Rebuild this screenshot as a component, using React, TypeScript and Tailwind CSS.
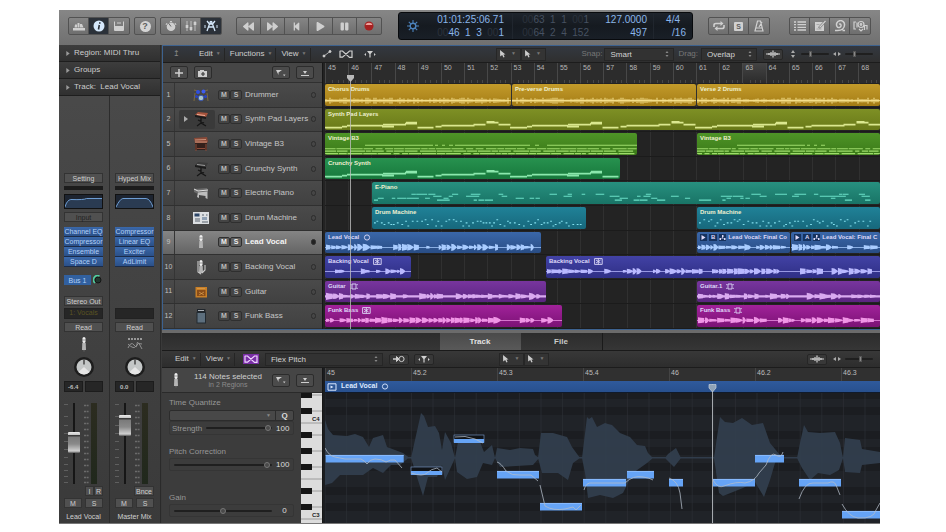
import { useState } from 'react';
import type { ReactNode } from 'react';
import clsx from 'clsx';
import { FaBackward, FaForward, FaStepBackward, FaPlay, FaPause } from 'react-icons/fa';

type WaveKind = 'drums' | 'pad' | 'organ' | 'epiano' | 'beats' | 'voice' | 'guitar';
type Badge = 'circle' | 'stereo' | 'loop';

interface Clip {
  title: string;
  from: number;
  to: number;
  badge?: Badge;
  take?: string;
}

interface Track {
  id: number;
  name: string;
  icon: ReactNode;
  kind: WaveKind;
  color: string;
  ink: string;
  clips: Clip[];
  folder?: boolean;
}

// visible length of the arrangement, in timeline units
const SPAN = 555;

function seeded(seed: number) {
  let s = seed * 7919 + 17;
  return () => {
    s = (s * 16807) % 2147483647;
    return s / 2147483647;
  };
}

function drumsPath(length: number, seed: number) {
  const rnd = seeded(seed);
  let d = '';
  for (let x = 1; x < length - 1; x += 2) {
    const h = rnd() > 0.8 ? 3 : 1 + rnd() * 1.5;
    d += `M${x} ${17 - h}V${17 + h}`;
  }
  return d + `M0 17H${length}`;
}

const PAD_A = [[0, 17, 19], [17, 22, 18], [22, 45, 17], [45, 58, 17], [57, 69, 18], [58, 81, 16], [81, 92, 14], [80, 92, 15]];
const PAD_B = [[0, 16, 19], [18, 24, 18], [24, 45, 17], [45, 57, 17], [56, 68, 16], [69, 77, 13], [69, 81, 14], [81, 93, 16]];

function padPath(length: number) {
  let d = '';
  for (let cell = 0; cell * 92.5 < length; cell++) {
    const notes = cell % 2 ? PAD_B : PAD_A;
    notes.forEach(([a, b, y]) => {
      const x = cell * 92.5 + a;
      if (x < length - 4) d += `M${x} ${y}H${Math.min(cell * 92.5 + b, length)}`;
    });
  }
  return d;
}

function organPath(length: number, seed: number) {
  const rnd = seeded(seed);
  let d = `M40 12.5H${Math.min(108, length)}M110 12.5h3M117 12.5h3M124 12.5h4`;
  if (length > 200) d += `M130 12.5H205M210 12.5h4M222 12.5H${length}`;
  [16, 18.5, 21].forEach((y) => {
    for (let x = 0; x < length - 6; ) {
      const w = 4 + rnd() * 12;
      d += `M${x} ${y}h${Math.min(w, length - x)}`;
      x += w + (rnd() > 0.6 ? 2.5 : 0.8);
    }
  });
  return d;
}

function notesPath(length: number, seed: number, small: boolean) {
  const rnd = seeded(seed);
  let d = '';
  for (let x = 2; x < length - 6; ) {
    const w = small ? 1.8 : 3 + rnd() * 6;
    const y = small ? 13 + Math.floor(rnd() * 5) * 1.6 : 12.5 + Math.floor(rnd() * 4) * 2;
    d += `M${x} ${y}h${w}`;
    x += small ? 2 + rnd() * 3 : rnd() > 0.8 ? 14 : 1 + rnd() * 5;
  }
  return d;
}

function blobsPath(length: number, seed: number, amp: number) {
  const rnd = seeded(seed);
  const mid = 15.6;
  let d = `M0 ${mid - 0.4}H${length}V${mid + 0.4}H0Z`;
  let x = 1;
  while (x < length - 9) {
    if (rnd() < 0.12) {
      x += 4 + rnd() * 8;
      continue;
    }
    const w = 2.5 + rnd() * 5;
    const h = amp * (0.4 + rnd() * 0.6);
    const rise = rnd() > 0.6 ? h * 0.9 : h;
    const tail = rnd() > 0.5 ? 0.8 : h * 0.7;
    d += `M${x} ${mid - rise}L${x + w * 0.5} ${mid - h * 0.8} ${x + w} ${mid - tail}V${mid + tail}L${x + w * 0.5} ${mid + h * 0.8} ${x} ${mid + rise}Z`;
    x += w + rnd() * 0.8;
  }
  return d;
}

function Wave({ kind, length, seed, ink }: { kind: WaveKind; length: number; seed: number; ink: string }) {
  let body: ReactNode;
  if (kind === 'drums') body = <path d={drumsPath(length, seed)} stroke={ink} strokeWidth="1" />;
  else if (kind === 'pad') body = <path d={padPath(length)} stroke={ink} strokeWidth="1.8" />;
  else if (kind === 'organ') body = <path d={organPath(length, seed)} stroke={ink} strokeWidth="1.1" />;
  else if (kind === 'epiano') body = <path d={notesPath(length, seed, false)} stroke={ink} strokeWidth="1.1" />;
  else if (kind === 'beats') body = <path d={notesPath(length, seed, true)} stroke={ink} strokeWidth="1.1" />;
  else if (kind === 'guitar')
    body = <path d={blobsPath(length, seed, 3.8) + `M0 14.4H${length}V16.8H0Z`} fill={ink} />;
  else body = <path d={blobsPath(length, seed, 3.8)} fill={ink} />;
  return (
    <svg className="absolute inset-0 h-full w-full" viewBox={`0 0 ${length} 22`} preserveAspectRatio="none" fill="none">
      {body}
    </svg>
  );
}

function ClipBadge({ type }: { type: Badge }) {
  return (
    <svg viewBox="0 0 9 7" className="h-[7px] w-[9px] shrink-0" fill="none" stroke="currentColor" strokeWidth="0.9">
      {type === 'circle' && <circle cx="4" cy="3.5" r="2.6" />}
      {type === 'stereo' && <path d="M.6.6h7.6v5.8H.6zM2 2l4.6 3M6.600 2 2 5M4.300 .6v5.800" />}
      {type === 'loop' && <path d="M2 1h4v5H2zM.8 2.200V1M7.200 2.200V1M.8 6V4.800M7.200 6V4.800" />}
    </svg>
  );
}

// ---- instrument pictures -------------------------------------------------

const pic = 'h-4 w-4';

const DrumKit = () => (
  <svg viewBox="0 0 16 16" className={pic}>
    <path d="M2 6l-1 8M14 6l1 8M1 3l4 1M15 3l-4 1" stroke="#8a7440" strokeWidth=".8" />
    <circle cx="5" cy="5" r="2" fill="#2f4fe0" />
    <circle cx="10.500" cy="4.500" r="2" fill="#3d5cf0" />
    <circle cx="3.500" cy="9.500" r="1.600" fill="#2a44c0" />
    <circle cx="12.500" cy="9.500" r="1.600" fill="#2a44c0" />
    <circle cx="8" cy="11" r="2.800" fill="#a9c6cc" stroke="#3752a8" />
  </svg>
);
const Keys = ({ wood, face }: { wood: string; face: string }) => (
  <svg viewBox="0 0 16 16" className={pic}>
    <path d="M2 4l3-3 10 1-2 4z" fill={wood} />
    <path d="M2 4l11 2v2L2 6z" fill="#1b1b1b" />
    <path d="M4 3.500l8 1" stroke={face} strokeWidth="1" />
    <path d="M8 7v6M4 15l4-3 5 3M5 9l6 3" stroke="#161616" strokeWidth="1.300" fill="none" />
  </svg>
);
const Organ = () => (
  <svg viewBox="0 0 16 16" className={pic}>
    <path d="M1 2l13-1 1 5-2 1H2z" fill="#8a4a38" />
    <path d="M2 4l11-.5M2 6h12" stroke="#d9a48b" strokeWidth=".8" />
    <path d="M2 7h12v7H2z" fill="#33201b" />
    <path d="M3 15V8M13 15V8M4 12.500h8" stroke="#8a4a38" />
  </svg>
);
const Piano = () => (
  <svg viewBox="0 0 16 16" className={pic}>
    <path d="M1 4l13-1 1 4-10 2-4-2z" fill="#6d6d6d" />
    <path d="M1 4l4 2 10-1" stroke="#e0e0e0" fill="none" />
    <path d="M5 7.500l9.500-1v7.500l-2-1V11L6 10v3l-2-1z" fill="#bdbdbd" />
  </svg>
);
const Machine = () => (
  <svg viewBox="0 0 16 16" className={pic}>
    <rect x="0" y="2" width="16" height="12" fill="#dcdfe2" />
    <rect x="1.500" y="3.500" width="5" height="3" fill="#2d4668" />
    <path d="M2 9h5M2 11h5M9 5h2M13 5h1.500M9 12h6" stroke="#59626c" strokeWidth="1.200" />
    <rect x="9" y="7" width="5" height="3" fill="#8fa0b4" />
  </svg>
);
const Mic = ({ stand }: { stand?: boolean }) => (
  <svg viewBox="0 0 16 16" className={pic}>
    <rect x="6.500" y="1" width="3" height="6" rx="1.500" fill="#efefef" />
    <path d="M6.300 7h3.400l.3 7H6z" fill="#b5b5b5" />
    <path d="M6.500 4h3M8 14v1.500" stroke="#777" strokeWidth=".7" />
    {stand && <path d="M5 2v11l3 2M12 6v5l-3 3" stroke="#c9c9c9" fill="none" strokeWidth="1.100" />}
  </svg>
);
const Amp = () => (
  <svg viewBox="0 0 16 16" className={pic}>
    <rect x="2.500" y="3" width="11.500" height="10.500" fill="#c87f27" />
    <rect x="4" y="6" width="8.500" height="6" fill="#8a4d18" />
    <path d="M4 4.500h8M6 8l5 3M11 8l-5 3" stroke="#dca050" strokeWidth=".7" />
  </svg>
);
const BassAmp = () => (
  <svg viewBox="0 0 16 16" className={pic}>
    <rect x="4" y="1" width="8.500" height="3" fill="#20262c" />
    <path d="M5 2.500h6" stroke="#cfd6dc" strokeWidth=".8" />
    <rect x="4" y="4.500" width="8.500" height="10.500" fill="#5d6f7e" stroke="#222a31" />
  </svg>
);

const tracks: Track[] = [
  { id: 1, name: 'Drummer', icon: <DrumKit />, kind: 'drums', color: 'from-[#c39b2a] to-[#a47c15]', ink: '#fbe795', clips: [
    { title: 'Chorus Drums', from: 0, to: 186 }, { title: 'Pre-verse Drums', from: 187, to: 371 }, { title: 'Verse 2 Drums', from: 372, to: 555 } ] },
  { id: 2, name: 'Synth Pad Layers', icon: <Keys wood="#a5533c" face="#f0b09a" />, kind: 'pad', folder: true, color: 'from-[#7e9025] to-[#697918]', ink: '#dbe88f', clips: [
    { title: 'Synth Pad Layers', from: 0, to: 555 } ] },
  { id: 5, name: 'Vintage B3', icon: <Organ />, kind: 'organ', color: 'from-[#4e9427] to-[#3b7a18]', ink: '#9fdc6c', clips: [
    { title: 'Vintage B3', from: 0, to: 312 }, { title: 'Vintage B3', from: 372, to: 555 } ] },
  { id: 6, name: 'Crunchy Synth', icon: <Keys wood="#3b3b3b" face="#999" />, kind: 'pad', color: 'from-[#27924f] to-[#17783c]', ink: '#8be8ad', clips: [
    { title: 'Crunchy Synth', from: 0, to: 295 } ] },
  { id: 7, name: 'Electric Piano', icon: <Piano />, kind: 'epiano', color: 'from-[#27907f] to-[#197466]', ink: '#6be0c8', clips: [
    { title: 'E-Piano', from: 47, to: 555 } ] },
  { id: 8, name: 'Drum Machine', icon: <Machine />, kind: 'beats', color: 'from-[#208298] to-[#17687c]', ink: '#84e0ee', clips: [
    { title: 'Drum Machine', from: 47, to: 261 }, { title: 'Drum Machine', from: 372, to: 555 } ] },
  { id: 9, name: 'Lead Vocal', icon: <Mic />, kind: 'voice', color: 'from-[#3a67a9] to-[#294d85]', ink: '#a9ccff', clips: [
    { title: 'Lead Vocal', from: 0, to: 216, badge: 'circle' }, { title: 'Lead Vocal: Final Co', from: 372, to: 465, take: 'B' }, { title: 'Lead Vocal: Final C', from: 466, to: 555, take: 'A' } ] },
  { id: 10, name: 'Backing Vocal', icon: <Mic stand />, kind: 'voice', color: 'from-[#4242a5] to-[#2f2f85]', ink: '#b9b9ff', clips: [
    { title: 'Backing Vocal', from: 0, to: 86, badge: 'stereo' }, { title: 'Backing Vocal', from: 221, to: 555, badge: 'stereo' } ] },
  { id: 11, name: 'Guitar', icon: <Amp />, kind: 'guitar', color: 'from-[#78359e] to-[#5a2580]', ink: '#d9aaf0', clips: [
    { title: 'Guitar', from: 0, to: 221, badge: 'loop' }, { title: 'Guitar.1', from: 372, to: 555, badge: 'loop' } ] },
  { id: 12, name: 'Funk Bass', icon: <BassAmp />, kind: 'voice', color: 'from-[#a1229a] to-[#7b1275]', ink: '#f095e6', clips: [
    { title: 'Funk Bass', from: 0, to: 237, badge: 'stereo' }, { title: 'Funk Bass', from: 372, to: 555, badge: 'loop' } ] },
];

// ---- toolbar ---------------------------------------------------------------

function ToolGroup({ children }: { children: ReactNode }) {
  return (
    <div className="flex h-[18px] shrink-0 divide-x divide-[#525252] overflow-hidden rounded-[2px] border border-[#525252] bg-gradient-to-b from-[#858585] to-[#6e6e6e]">
      {children}
    </div>
  );
}

function ToolButton({ label, active, wide, children }: { label: string; active?: boolean; wide?: boolean; children: ReactNode }) {
  return (
    <button
      aria-label={label}
      className={clsx(
        'flex items-center justify-center',
        wide ? 'w-6' : 'w-5',
        active ? 'bg-[#2b3139] text-[#d5e8fb]' : 'text-[#cfcfcf]'
      )}
    >
      {children}
    </button>
  );
}

const glyph = 'h-3 w-3';

function Toolbar() {
  return (
    <header className="flex h-[35px] items-center bg-gradient-to-b from-[#868686] to-[#707070] px-[9px] pb-[3px]">
      <div className="flex gap-1">
        <ToolGroup>
          <ToolButton label="Library">
            <svg viewBox="0 0 12 12" className={glyph} fill="currentColor"><path d="M0 8h12v2.500H0zM2 4.500h2v3H1.500zM4.500 3h2v4.500h-2zM7 4h2l1.500 3.500H7z" /></svg>
          </ToolButton>
          <ToolButton label="Inspector" active>
            <svg viewBox="0 0 12 12" className={glyph}><circle cx="6" cy="6" r="5.500" fill="currentColor" /><path d="M6.800 2.300v1.500M6.300 5l-.8 4.500" stroke="#2b3139" strokeWidth="1.600" /></svg>
          </ToolButton>
          <ToolButton label="Toolbar">
            <svg viewBox="0 0 12 12" className={glyph} fill="none" stroke="currentColor"><path d="M1.500 1.500v9h9v-9M1.500 6.500h9M4 3h4" /><path d="M2 8.500h8" strokeWidth="3" /></svg>
          </ToolButton>
        </ToolGroup>
        <ToolGroup>
          <ToolButton label="Quick Help">
            <span className="flex h-[11px] w-[11px] items-center justify-center rounded-full bg-[#d4d4d4] text-[9px] font-bold leading-none text-[#5d5d5d]">?</span>
          </ToolButton>
        </ToolGroup>
        <ToolGroup>
          <ToolButton label="Smart Controls">
            <svg viewBox="0 0 12 12" className={glyph} fill="currentColor"><circle cx="6" cy="6.800" r="4.300" /><path d="M6 6.500L3.500 3" stroke="#666" /><path d="M1 5l1-2M10 3l1 2M5 1.500h2" stroke="currentColor" /></svg>
          </ToolButton>
          <ToolButton label="Mixer">
            <svg viewBox="0 0 12 12" className={glyph} stroke="currentColor"><path d="M2 1v10M6 1v10M10 1v10" strokeWidth=".8" /><path d="M2 5v3M6 7v3M10 2v3" strokeWidth="2.600" /></svg>
          </ToolButton>
          <ToolButton label="Editors" active>
            <svg viewBox="0 0 14 12" className="h-3 w-[14px]" fill="none" stroke="currentColor" strokeWidth="1.300"><path d="M3 1l2.500 3h3L11 1M5.500 4l-2.500 7M8.500 4L11 11M5 7h4" /><circle cx="7" cy="2.500" r="1" /><path d="M1 5v3M13 5v3" strokeWidth="1" /></svg>
          </ToolButton>
        </ToolGroup>
      </div>
      <div className="ml-[14px]">
        <ToolGroup>
          <ToolButton label="Rewind" wide><FaBackward size={11} /></ToolButton>
          <ToolButton label="Forward" wide><FaForward size={11} /></ToolButton>
          <ToolButton label="Go to Beginning" wide><FaStepBackward size={9} /></ToolButton>
          <ToolButton label="Play" wide><FaPlay size={9} /></ToolButton>
          <ToolButton label="Pause" wide><FaPause size={9} /></ToolButton>
          <ToolButton label="Record" wide>
            <svg viewBox="0 0 10 10" className="h-[10px] w-[10px]"><circle cx="5" cy="5" r="4.500" fill="#a62121" /><path d="M1.500 4a3.600 3 0 0 1 7 0z" fill="#f0a09a" /></svg>
          </ToolButton>
        </ToolGroup>
      </div>
      <Display />
      <ToolGroup>
        <ToolButton label="Cycle">
          <svg viewBox="0 0 14 12" className="h-3 w-[14px]" fill="none" stroke="currentColor" strokeWidth="1.600"><path d="M2 7V5q0-1.500 2-1.500h5M12 5v2q0 1.500-2 1.500H5" /><path d="M8.500 1l3 2.500-3 2.500zM5.500 6l-3 2.500 3 2.500z" fill="currentColor" stroke="none" /></svg>
        </ToolButton>
        <ToolButton label="Solo">
          <span className="flex h-[9px] w-[9px] items-center justify-center rounded-[1px] bg-[#d0d0d0] text-[7px] font-bold leading-none text-[#5d5d5d]">S</span>
        </ToolButton>
        <ToolButton label="Metronome">
          <svg viewBox="0 0 12 12" className={glyph} fill="none" stroke="currentColor" strokeWidth="1.200"><path d="M4.500 1h3L10 11H2zM3 8h6M6 7l3-5" /></svg>
        </ToolButton>
      </ToolGroup>
      <div className="ml-[19px]">
        <ToolGroup>
          <ToolButton label="List Editors">
            <svg viewBox="0 0 12 12" className={glyph} stroke="currentColor"><path d="M0 2h2M0 4.700h2M0 7.300h2M0 10h2M3.500 2H12M3.500 4.700H12M3.500 7.300H12M3.500 10H12" strokeWidth="1.300" /></svg>
          </ToolButton>
          <ToolButton label="Note Pads">
            <svg viewBox="0 0 12 12" className={glyph} fill="currentColor"><path d="M1 2h9v9H1z" /><path d="M5 8l6-6.500" stroke="#707070" strokeWidth="2.500" /><path d="M5.500 7.500L11.500 1" stroke="currentColor" strokeWidth="1.300" /><path d="M2.500 4.500h3M2.500 9h5" stroke="#999" strokeWidth=".7" /></svg>
          </ToolButton>
          <ToolButton label="Apple Loops">
            <svg viewBox="0 0 12 12" className={glyph} fill="none" stroke="currentColor" strokeWidth="1.500"><path d="M1 10.500h2.500C8 10.500 10.500 8 10.500 5A4 4 0 1 0 3 6.500C4 8.500 7.500 7.500 7 5q-.5-1.500-2-.8M8.500 10.500H11" /></svg>
          </ToolButton>
          <ToolButton label="Browser">
            <svg viewBox="0 0 15 12" className="h-3 w-[15px]" fill="none" stroke="currentColor" strokeWidth="1.200"><path d="M3 2H1v7h2M4 7.500V2.500" /><circle cx="8" cy="4.500" r="3" /><circle cx="8" cy="4.500" r=".8" /><path d="M11.500 10V5.500h2.500V9.500M6 9l2 2 2-2" /></svg>
          </ToolButton>
        </ToolGroup>
      </div>
    </header>
  );
}

const dim = 'text-[#2b323c]';

function Display() {
  return (
    <section
      aria-label="LCD display"
      className="ml-4 mr-[15px] flex h-7 min-w-0 flex-1 items-stretch overflow-hidden rounded-[3px] border border-[#080a0d] bg-gradient-to-b from-[#1e242c] via-[#151a20] to-[#191f27] text-[10px] leading-[13px] text-[#8ab6ea]"
    >
      <button aria-label="Display mode" className="ml-2 flex shrink-0 items-center text-[#4c83bd]">
        <svg viewBox="0 0 12 12" className="h-3 w-3" fill="none" stroke="currentColor">
          <circle cx="6" cy="6" r="2.800" strokeWidth="1.400" />
          <path d="M6 0v3M6 9v3M0 6h3M9 6h3M1.800 1.800l2 2M8.200 8.200l2 2M10.200 1.800l-2 2M3.800 8.200l-2 2" strokeWidth="1.100" />
        </svg>
      </button>
      <div className="w-[85px] shrink-0 whitespace-pre text-right">
        <p>01:01:25:06.71</p>
        <p><span className={dim}>00</span>46  1  3  <span className={dim}>00</span>1</p>
      </div>
      <div className="ml-2 min-w-0 flex-1 whitespace-pre border-l border-[#20262e] pr-[6px] text-right text-[#465161]">
        <p><span className={dim}>00</span>63  1  1  <span className={dim}>00</span>1</p>
        <p><span className={dim}>00</span>64  2  4  152</p>
      </div>
      <div className="w-[52px] shrink-0 text-right">
        <p>127.0000</p>
        <p>497</p>
      </div>
      <div className="ml-[6px] w-[39px] shrink-0 border-l border-[#20262e] pr-[6px] text-right">
        <p className="pr-[6px]">4/4</p>
        <p>/16</p>
      </div>
    </section>
  );
}

// ---- shared small controls ---------------------------------------------------

const flat = 'rounded-[2px] border border-[#262626] bg-[#383838]';

function MenuButton({ children }: { children: string }) {
  return (
    <button className="flex h-[13px] items-center gap-[3px] border-r border-[#252525] pl-[5px] pr-[3px]">
      {children}
      <span className="text-[5px] text-[#777]">▼</span>
    </button>
  );
}

function Tools() {
  return (
    <div className="flex">
      {['Left-click tool', 'Command-click tool'].map((label) => (
        <button key={label} aria-label={label} className="flex h-[13px] w-[25px] items-center justify-center gap-[5px] border border-[#262626] bg-[#343434]">
          <svg viewBox="0 0 6 8" className="h-2 w-[6px]" fill="#ccc"><path d="M0 0l5.500 4.500H3.500L4.600 7l-1.200.6L2.200 5 .2 6.600z" /></svg>
          <span className="text-[5px] text-[#777]">▼</span>
        </button>
      ))}
    </div>
  );
}

function Picker({ id, value, width }: { id: string; value: string; width: string }) {
  return (
    <div className={clsx('flex h-[13px] items-center justify-between border border-[#262626] bg-[#323232] pl-[5px] pr-1', width)}>
      <select id={id} aria-label={id} className="w-full appearance-none bg-transparent text-[8px] leading-[11px] text-[#d2d2d2] outline-none">
        <option>{value}</option>
      </select>
      <svg viewBox="0 0 4 8" className="h-2 w-1 shrink-0" fill="#888"><path d="M2 1l1.500 2h-3zM2 7L.5 5h3z" /></svg>
    </div>
  );
}

function Slider({ label, value, className, light }: { label: string; value: number; className?: string; light?: boolean }) {
  return (
    <input
      type="range"
      aria-label={label}
      defaultValue={value}
      className={clsx(
        'h-[2px] min-w-0 appearance-none rounded bg-[#1f1f1f] [&::-webkit-slider-thumb]:appearance-none [&::-webkit-slider-thumb]:border',
        light
          ? '[&::-webkit-slider-thumb]:h-[6px] [&::-webkit-slider-thumb]:w-[3px] [&::-webkit-slider-thumb]:border-[#555] [&::-webkit-slider-thumb]:bg-[#888]'
          : '[&::-webkit-slider-thumb]:h-[6px] [&::-webkit-slider-thumb]:w-[6px] [&::-webkit-slider-thumb]:rounded-full [&::-webkit-slider-thumb]:border-[#777] [&::-webkit-slider-thumb]:bg-[#4a4a4a]',
        className
      )}
    />
  );
}

const FlexGlyph = () => (
  <svg viewBox="0 0 14 8" className="h-2 w-[14px]" fill="none" stroke="currentColor" strokeWidth="1.200">
    <path d="M1 .8v6.400H3.500L10.500 1H13v6.400H10.500L3.500 1H1" />
  </svg>
);
const CatchGlyph = () => (
  <svg viewBox="0 0 12 8" className="h-2 w-3" fill="currentColor"><path d="M3 1h6L6.600 4v3.500H5.400V4zM2 3v3L.3 4.500zM10 3v3l1.700-1.500z" /></svg>
);
const WaveGlyph = () => (
  <svg viewBox="0 0 14 8" className="h-2 w-[14px]" stroke="currentColor" strokeWidth="1.200"><path d="M0 4h14M3 3v2M5 2v4M7 .5v7M9 2v4M11 3v2" /></svg>
);
const ArrowsGlyph = ({ up }: { up?: boolean }) => (
  <svg viewBox="0 0 8 8" className={clsx('h-2 w-2 shrink-0', up && 'rotate-90')} fill="#aaa"><path d="M0 4l3-2v4zM8 4L5 2v4z" /></svg>
);

function HeaderButton({ label, children }: { label: string; children: ReactNode }) {
  return (
    <button aria-label={label} className="flex h-[13px] w-[18px] items-center justify-center rounded-[2px] border border-[#2c2c2c] bg-[#4b4b4b] text-[#cfcfcf]">
      {children}
    </button>
  );
}
const FilterGlyph = () => (
  <svg viewBox="0 0 10 8" className="h-2 w-[10px]" fill="currentColor"><path d="M0 1h6L2.500 3.500V6zM7 5.500l1.200 1.700L9.500 5.500z" /></svg>
);
const TrayGlyph = () => (
  <svg viewBox="0 0 10 8" className="h-2 w-[10px]" fill="currentColor"><path d="M3 2h4L5 5zM1 6h8v1H1z" /></svg>
);

// ---- inspector -----------------------------------------------------------------

interface StripProps {
  preset: string;
  input?: string;
  inserts: string[];
  send?: string;
  output?: string;
  group?: string;
  gain: string;
  level: number;
  name: string;
  curve: string;
  icon: ReactNode;
  footer: string[];
}

const slotBase = 'flex h-[10px] shrink-0 items-center justify-center border border-[#333] bg-[#505050] text-[7px] leading-none whitespace-nowrap';
const slot = slotBase + ' text-[#cfcfcf]';

function Strip(p: StripProps) {
  return (
    <div className="flex min-w-0 flex-1 flex-col pl-[5px] pr-[6px] pt-[77px]">
      <button className={slot}>{p.preset}</button>
      <div className="mt-[3px] h-1 bg-[#1c1c1c]" />
      <div className="mt-1 h-[15px] border border-[#111] bg-[#1d2430]">
        <svg viewBox="0 0 38 13" className="h-full w-full" preserveAspectRatio="none">
          <path d={p.curve + 'V13H0Z'} fill="#2a3b52" />
          <path d={p.curve} fill="none" stroke="#6fa0d6" />
        </svg>
      </div>
      <div className="mt-[3px] flex h-[15px] flex-col">
        {p.input && <button className={clsx(slotBase, 'text-[#222]')}>{p.input}</button>}
      </div>
      <div className="flex h-[48px] flex-col">
        {p.inserts.map((name) => (
          <button key={name} className="flex h-[10px] shrink-0 items-center justify-center border-b border-[#1c2c48] bg-gradient-to-b from-[#3a68aa] to-[#2b5088] text-[7px] leading-none text-[#b3d0f8] whitespace-nowrap">
            {name}
          </button>
        ))}
      </div>
      <div className="flex h-[21px] items-start justify-between">
        {p.send && (
          <>
            <button className="flex h-[10px] w-[27px] items-center justify-center bg-[#31609f] text-[7px] leading-none text-[#b3d0f8]">{p.send}</button>
            <svg viewBox="0 0 10 10" className="h-[10px] w-[10px]"><circle cx="5" cy="5" r="3" fill="#22382f" stroke="#151515" /><path d="M2 8A4.200 4.200 0 0 1 6.500 1" fill="none" stroke="#4fd0a0" strokeWidth="1.600" /></svg>
          </>
        )}
      </div>
      <div className="flex h-3 flex-col">{p.output && <button className={slot}>{p.output}</button>}</div>
      <div className="flex h-[11px] items-center justify-center border border-[#222] bg-[#262626] text-[7px] text-[#5b5322]">{p.group}</div>
      <button className={clsx(slot, 'mt-[3px]')}>Read</button>
      <div className="mt-1 flex h-4 justify-center">{p.icon}</div>
      <svg viewBox="0 0 22 22" className="mx-auto mt-1 h-[22px] w-[22px] shrink-0">
        <circle cx="11" cy="11" r="10" fill="#1d1d1d" />
        <circle cx="11" cy="11" r="7.500" fill="#c4c7c7" />
        <path d="M11 3.500v5" stroke="#333" strokeWidth="1.300" />
        <path d="M5.500 16a7.500 7.500 0 0 0 11 0L11 11z" fill="#e6e6e6" />
      </svg>
      <div className="mt-[3px] flex gap-[2px]">
        <span className="h-[11px] flex-1 border border-[#1c1c1c] bg-[#262626] text-center text-[6px] font-bold leading-[10px] text-[#bdbdbd]">{p.gain}</span>
        <span className="h-[11px] flex-1 border border-[#1c1c1c] bg-[#262626]" />
      </div>
      <div className="mt-[11px] flex h-[81px] justify-between pr-[6px]">
        <div className="flex">
          <svg viewBox="0 0 4 80" className="h-full w-1" stroke="#686868" strokeWidth=".8"><path d="M0 1h4M0 13h4M0 22h4M0 30h4M0 38h4M0 46h4M0 54h4M0 61h4M0 67h4M0 73h4M0 79h4" /></svg>
          <input
            type="range"
            aria-label={p.name + ' volume'}
            defaultValue={p.level}
            className="h-full w-3 appearance-none bg-[linear-gradient(90deg,transparent_5px,#161616_5px,#161616_7px,transparent_7px)] [direction:rtl] [writing-mode:vertical-lr] [&::-webkit-slider-thumb]:h-[21px] [&::-webkit-slider-thumb]:w-3 [&::-webkit-slider-thumb]:appearance-none [&::-webkit-slider-thumb]:rounded-[1px] [&::-webkit-slider-thumb]:bg-[linear-gradient(180deg,#ececec_0,#c4c4c4_3px,#3a3a3a_3px,#3a3a3a_4px,#7a7a7a_5px,#8a8a8a_12px,#d0d0d0_19px,#555_21px)]"
          />
        </div>
        <div className="flex gap-[2px]">
          <svg viewBox="0 0 5 80" className="h-full w-[5px]" stroke="#6b6b6b" strokeWidth="1.600"><path d="M0 2h5M0 8h5M0 14h5M0 20h5M0 26h5M0 32h5M0 38h5M0 44h5M0 50h5M0 56h5M0 62h5M0 68h5M0 74h5M0 79h5" strokeDasharray="2 .6" /></svg>
          <div className="w-[6px] bg-gradient-to-b from-[#2c2c20] to-[#20281c]" />
        </div>
      </div>
      <div className="mt-[2px] flex justify-end">
        {p.footer.map((t) => (
          <button key={t} className={clsx(slot, 'min-w-[9px] px-px')}>{t}</button>
        ))}
      </div>
      <div className="mt-[2px] flex justify-between">
        <button className={clsx(slot, 'w-[18px]')}>M</button>
        <button className={clsx(slot, 'w-[18px]')}>S</button>
      </div>
      <p className="mt-1 whitespace-nowrap text-center text-[7px] leading-[10px] text-[#d0d0d0]">{p.name}</p>
    </div>
  );
}

function Inspector() {
  return (
    <aside className="flex w-[102px] shrink-0 flex-col border-r border-[#2a2a2a] bg-gradient-to-b from-[#4b4b4b] to-[#3a3a3a]">
      {['Region: MIDI Thru', 'Groups', 'Track:  Lead Vocal'].map((t) => (
        <button key={t} className="flex h-[17px] shrink-0 items-center gap-1 whitespace-pre border-b border-[#1e1e1e] bg-gradient-to-b from-[#3d3d3d] to-[#303030] pl-[7px] text-[8px] text-[#cdcdcd]">
          <svg viewBox="0 0 4 6" className="h-[5px] w-1" fill="#9a9a9a"><path d="M0 0l4 3-4 3z" /></svg>
          {t}
        </button>
      ))}
      <div className="flex flex-1 divide-x divide-[#2c2c2c]">
        <Strip preset="Setting" input="Input" inserts={['Channel EQ', 'Compressor', 'Ensemble', 'Space D']} send="Bus 1" output="Stereo Out" group="1: Vocals"
          gain="-6.4" level={51} name="Lead Vocal" curve="M0 12Q2 5 6 4.500Q20 5 22 3.500H38" icon={<Mic />} footer={['I', 'R']} />
        <Strip preset="Hyped Mix" inserts={['Compressor', 'Linear EQ', 'Exciter', 'AdLimit']}
          gain="0.0" level={80} name="Master Mix" curve="M0 12Q4 4 7 3.500H31Q35 4 38 12" footer={['Bnce']}
          icon={<svg viewBox="0 0 16 16" className="h-4 w-4" fill="none" stroke="#999"><path d="M1 3h14" strokeDasharray="2 1" strokeWidth="2" /><path d="M1 12q3-7 6-3t3-1 5 5M1 8q6 6 8 2t6-2" strokeWidth=".9" /></svg>} />
      </div>
    </aside>
  );
}

// ---- arrangement ---------------------------------------------------------------

function TrackHeader({ track, selected, onSelect }: { track: Track; selected: boolean; onSelect: () => void }) {
  const chip = clsx('h-[10px] w-3 rounded-[2px] border border-[#2f2f2f] text-center text-[7px] font-bold leading-[8px]', selected ? 'bg-[#5f5f5f] text-[#eee]' : 'bg-[#444] text-[#bbb]');
  return (
    <div
      onClick={onSelect}
      className={clsx(
        'flex min-h-0 flex-1 items-center border-b border-[#303030] bg-gradient-to-b',
        selected ? 'from-[#858585] to-[#646464] text-[#f4f4f4]' : 'from-[#4a4a4a] to-[#414141] text-[#c6c6c6]'
      )}
    >
      <span className="flex w-3 shrink-0 items-center justify-center self-stretch border-r border-[#353535] text-[7px] text-[#c2c2c2]">{track.id}</span>
      <div className={clsx('ml-1 flex h-[19px] w-9 shrink-0 items-center justify-end gap-[5px] rounded-[2px] pr-[6px]', track.folder && 'bg-[#3a3a3a]')}>
        {track.folder && <svg viewBox="0 0 4 6" className="h-[6px] w-1" fill="#aaa"><path d="M0 0l4 3-4 3z" /></svg>}
        {track.icon}
      </div>
      <div className="ml-[3px] flex shrink-0">
        <button aria-label={'Mute ' + track.name} className={chip}>M</button>
        <button aria-label={'Solo ' + track.name} className={chip}>S</button>
      </div>
      <span className={clsx('ml-[3px] flex-1 whitespace-nowrap text-[8px]', selected && 'font-bold')}>{track.name}</span>
      <span className={clsx('mr-[6px] h-[6px] w-[5px] shrink-0 rounded-full border border-[#2c2c2c]', selected && 'bg-[#222]')} />
    </div>
  );
}

function Lane({ track }: { track: Track }) {
  return (
    <div className="relative min-h-0 flex-1 border-b border-[#1b1b1b]">
      {track.clips.map((c, i) => (
        <div
          key={i}
          className={clsx('absolute bottom-px top-px overflow-hidden rounded-[2px] bg-gradient-to-b', track.color)}
          style={{ left: (c.from / SPAN) * 100 + '%', width: ((c.to - c.from) / SPAN) * 100 + '%' }}
        >
          <Wave kind={track.kind} length={c.to - c.from} seed={track.id * 5 + i} ink={track.ink} />
          <p className={clsx('relative flex items-center whitespace-nowrap pl-[3px] pt-[2px] text-[6px] font-bold leading-[7px]', c.take ? 'gap-[2px]' : 'gap-1', track.kind === 'voice' || track.kind === 'guitar' ? 'text-[#dedaf8]' : 'text-[#eef0cf]')}>
            {c.take && (
              <span className="flex gap-[2px]">
                <svg viewBox="0 0 7 7" className="h-[7px] w-[7px] bg-[#16325e]" fill="currentColor"><path d="M1.500 1l4 2.500-4 2.500z" /></svg>
                <span className="bg-[#16325e] px-[2px]">{c.take}</span>
                <svg viewBox="0 0 7 7" className="h-[7px] w-[7px] bg-[#16325e]" fill="currentColor"><path d="M3 1h1.500v2H3zM.5 4H2v2H.5zM5 4h1.500v2H5zM2 4.500L3.500 3 5 4.500" /></svg>
              </span>
            )}
            {c.title}
            {c.badge && <ClipBadge type={c.badge} />}
          </p>
        </div>
      ))}
    </div>
  );
}

const bars = Array.from({ length: 24 }, (_, i) => 45 + i);

function Arrangement() {
  const [selected, setSelected] = useState(9);
  return (
    <section className="border-b border-l border-t border-[#3d628f] bg-[#303030]">
      <div className="flex h-[17px] items-center border-b border-[#1c1c1c] bg-gradient-to-b from-[#333840] to-[#2f2f2f] pl-[10px] pr-[7px] text-[8px] text-[#cfcfcf]">
        <span className="w-[21px] text-[#888]">↥</span>
        <MenuButton>Edit</MenuButton>
        <MenuButton>Functions</MenuButton>
        <MenuButton>View</MenuButton>
        <div className="ml-[9px] flex items-center gap-[5px]">
          <button aria-label="Automation" className="flex w-[14px] justify-center">
            <svg viewBox="0 0 10 8" className="h-2 w-[10px]" stroke="#d0d0d0" fill="#d0d0d0"><path d="M2 6l6-4.500" strokeWidth=".8" /><circle cx="2" cy="6" r="1" /><circle cx="8" cy="1.500" r="1" /></svg>
          </button>
          <button aria-label="Flex"><FlexGlyph /></button>
          <button aria-label="Catch" className="ml-[6px]"><CatchGlyph /></button>
        </div>
        <div className="flex flex-1 justify-center pl-[84px]"><Tools /></div>
        <label htmlFor="Snap" className="mr-[2px] text-[#777]">Snap:</label>
        <Picker id="Snap" value="Smart" width="w-[70px]" />
        <label htmlFor="Drag" className="ml-1 mr-[3px] text-[#777]">Drag:</label>
        <Picker id="Drag" value="Overlap" width="w-[56px]" />
        <button aria-label="Waveform zoom" className={clsx(flat, 'ml-[6px] flex h-[11px] w-5 items-center justify-center')}><WaveGlyph /></button>
        <span className="ml-[6px] flex items-center"><ArrowsGlyph up /><Slider label="Vertical zoom" value={30} className="ml-1 w-7" light /></span>
        <span className="ml-1 flex items-center"><ArrowsGlyph /><Slider label="Horizontal zoom" value={30} className="ml-1 w-7" light /></span>
      </div>
      <div className="flex">
        <div className="flex w-[159px] shrink-0 flex-col">
          <div className="flex h-[20px] items-center border-b border-[#303030] bg-[#464646] pl-[7px] pr-2">
            <HeaderButton label="Add track"><svg viewBox="0 0 8 8" className="h-2 w-2" stroke="currentColor" strokeWidth="1.500"><path d="M4 0v8M0 4h8" /></svg></HeaderButton>
            <span className="ml-[6px] flex-1"><HeaderButton label="Duplicate track"><svg viewBox="0 0 10 8" className="h-2 w-[10px]"><path d="M0 2h2V1h4v1h3v6H0z" fill="currentColor" /><path d="M5 3v4M3 5h4" stroke="#3a3a3a" strokeWidth="1.200" /></svg></HeaderButton></span>
            <span className="mr-[6px]"><HeaderButton label="Track filter"><FilterGlyph /></HeaderButton></span>
            <HeaderButton label="Track header options"><TrayGlyph /></HeaderButton>
          </div>
          <div className="flex h-[246px] flex-col">
            {tracks.map((t) => (
              <TrackHeader key={t.id} track={t} selected={t.id === selected} onSelect={() => setSelected(t.id)} />
            ))}
          </div>
        </div>
        <div className="min-w-0 flex-1 overflow-hidden border-l border-[#161616] bg-[#232323] pl-[2px]">
          <div className="relative">
            <div className="flex h-[20px] overflow-hidden bg-[#2c2c2c]">
              {bars.map((b) => (
                <div key={b} className={clsx('flex w-[4.18%] shrink-0 flex-col justify-between border-l border-[#484848] pl-[2px] text-[7px] leading-[9px] text-[#b5b5b5]', b === 63 && 'bg-gradient-to-b from-[#444] to-[#2c2c2c]')}>
                  {b}
                  <span className="flex h-[3px] justify-evenly"><i className="w-px bg-[#484848]" /><i className="w-px bg-[#484848]" /><i className="w-px bg-[#484848]" /></span>
                </div>
              ))}
            </div>
            <div className="relative flex h-[246px] flex-col bg-[repeating-linear-gradient(90deg,#303030_0,#303030_1px,transparent_1px,transparent_4.18%)]">
              {tracks.map((t) => (
                <Lane key={t.id} track={t} />
              ))}
            </div>
            {/* playhead */}
            <div className="absolute bottom-0 left-[4.5%] top-[12px] w-px bg-[#bdbdbd]/80">
              <svg viewBox="0 0 7 7" className="absolute -left-[3px] top-0 h-[7px] w-[7px]"><path d="M0 0h7v3L3.500 7 0 3z" fill="#b9b9b9" /></svg>
            </div>
          </div>
        </div>
      </div>
    </section>
  );
}

// ---- flex pitch editor ---------------------------------------------------------

// x, y, width, hollow upper half
const pitchNotes: [number, number, number, boolean?][] = [
  [0.7, 62, 78], [86, 74, 31, true], [129, 42, 30, true], [172, 78, 42], [215, 110, 42], [258, 86, 43],
  [302, 78, 27], [344, 86, 14], [388, 86, 42], [430, 62, 29], [474, 86, 42], [517, 118, 38],
];
const blackRows = [-2, 14, 38, 54, 70, 94, 110];

const ghost =
  'M0 27L3 36 8 42 22 43 30 41 38 44 44 54 48 45 58 42 62 54 78 60 84 64.500 75 72 66 72 58 80 48 75 38 82 15 82 7 90 0 92Z' +
  'M86 65L90 47 96 20 99 23 103 34 110 33 114 40 117 57 120 39 126 50 130 65 126 74 120 87 117 72 112 84 103 84 98 103 92 84Z' +
  'M130 65L133 49 143 45 155 49 159 59 167 52 170 65 167 72 158 70 152 84 142 86 132 79Z' +
  'M170 65L172 55 185 57 195 55 208 56 210 62 214 65 208 72 175 74Z' +
  'M213 65L216 40 228 40 242 44 247 54 255 65 248 70 243 87 233 80 217 80Z' +
  'M257 65L262 24 264 26 267 24 272 34 280 30 283 31 287 32 295 40 305 44 312 52 320 53 323 60 328 65 322 70 308 80 298 100 288 105 275 102 263 105 260 80Z' +
  'M340 65L343 61 351 55 356 65 349 74Z' +
  'M389 65L392 44 395 24 400 29 408 30 417 25 427 32 438 30 445 50 455 62 450 70 445 87 439 104 430 89 418 95 398 103 394 100Z' +
  'M472 65L475 50 479 32 483 39 495 40 510 39 515 50 518 65 514 77 505 82 493 80 485 87 477 75Z' +
  'M518 65L520 45 535 47 537 56 555 59V70L537 72 535 80 520 79Z' +
  'M0 64H555V65.500H0Z';

const pitchLines = [
  'M0 55Q4 63 10 64L20 66H36Q40 68 42 71Q45 66 50 66Q57 66 61 69Q66 66 70 67L77 75',
  'M86 80Q98 84 102 80T112 75L117 79',
  'M130 44Q140 42 150 46L158 50',
  'M172 69Q176 70 181 78Q187 83 195 82H206L213 88',
  'M215 92L220 113Q228 118 240 116L248 114 251 117 256 112',
  'M259 97Q261 89 267 90H300Q308 82 318 84Q325 85 328 87',
  'M344 85Q353 88 355 100L357 116',
  'M388 87Q393 96 399 93Q412 88 420 90Q430 88 434 80L441 72Q446 58 451 62T458 59',
  'M474 106Q480 89 488 90H503Q509 87 511 92L515 102',
  'M517 111Q524 124 533 125Q549 126 551 117L555 110',
];

function PitchEditor() {
  return (
    <svg viewBox="0 0 555 130" preserveAspectRatio="none" className="block h-[130px] w-full bg-[#202328]">
      {blackRows.map((y) => (
        <rect key={y} x="0" y={y} width="555" height="8" fill="#1b1d21" />
      ))}
      {Array.from({ length: 26 }, (_, i) => (
        <path key={i} d={`M${i * 21.6} 0V130`} stroke="#2f3339" strokeWidth=".6" />
      ))}
      <path d={ghost} fill="#323f4e" fillOpacity=".92" />
      {pitchNotes.map(([x, y, w, hollow]) => (
        <g key={x}>
          <rect x={x} y={y} width={w} height="7.500" fill={hollow ? '#101317' : '#66a4f6'} stroke={hollow ? '#7d9fd0' : 'none'} strokeWidth=".6" />
          {hollow && <rect x={x} y={y + 4} width={w} height="4" fill="#66a4f6" />}
          {!hollow && <path d={`M${x} ${y + 0.4}h${w}`} stroke="#94c2ff" strokeWidth=".8" />}
        </g>
      ))}
      {pitchLines.map((d) => (
        <path key={d} d={d} fill="none" stroke="#b4bdc9" strokeWidth=".9" strokeOpacity=".85" />
      ))}
    </svg>
  );
}

function Keyboard() {
  return (
    <svg viewBox="0 0 21 130" preserveAspectRatio="none" className="h-[130px] w-[21px] shrink-0 bg-[#dcdcdc]" aria-label="Keyboard">
      <path d="M0 2H21M0 18H21M0 30H21M0 42H21M0 58H21M0 74H21M0 86H21M0 98H21M0 114H21M0 126H21" stroke="#8c8c8c" strokeWidth=".8" />
      {blackRows.map((y) => (
        <rect key={y} x="0" y={y + 1} width="11" height="6" fill="#151515" />
      ))}
      <text x="11" y="28" fontSize="6" fontWeight="bold" fill="#222">C4</text>
      <text x="11" y="124" fontSize="6" fontWeight="bold" fill="#222">C3</text>
    </svg>
  );
}

function Editor() {
  return (
    <section className="border-t-[3px] border-[#6b6b6b] bg-[#3c3c3c]">
      <nav className="flex h-[18px] justify-center border-b border-[#1a1a1a] bg-gradient-to-b from-[#2c2c2c] to-[#363636] text-[8px] font-bold text-[#c9c9c9]">
        <button className="w-[81px] bg-gradient-to-b from-[#4a4a4a] to-[#595959] text-[#e2e2e2]">Track</button>
        <button className="w-[82px] border-r border-[#1a1a1a]">File</button>
      </nav>
      <div className="flex h-[17px] items-center border-b border-[#1c1c1c] bg-gradient-to-b from-[#383838] to-[#2d2d2d] pl-[8px] pr-[7px] text-[8px] text-[#cfcfcf]">
        <MenuButton>Edit</MenuButton>
        <MenuButton>View</MenuButton>
        <button aria-label="Flex mode" className="ml-2 flex h-[10px] w-4 items-center justify-center bg-[#7a2fa6] text-[#f0d8ff]"><FlexGlyph /></button>
        <span className="ml-[6px]"><Picker id="Flex Mode" value="Flex Pitch" width="w-[118px]" /></span>
        <button aria-label="MIDI in" className={clsx(flat, 'ml-[6px] flex h-[11px] w-5 items-center justify-center')}>
          <svg viewBox="0 0 12 8" className="h-2 w-3" fill="none" stroke="#cfcfcf"><path d="M0 4h4" strokeWidth="1.500" /><path d="M3.500 1.500L6 4 3.500 6.500z" fill="#cfcfcf" /><circle cx="8.500" cy="4" r="2.600" /></svg>
        </button>
        <button aria-label="Catch playhead" className={clsx(flat, 'ml-[5px] flex h-[11px] w-5 items-center justify-center')}><CatchGlyph /></button>
        <div className="flex-1 pl-[65px]"><Tools /></div>
        <button aria-label="Waveform size" className={clsx(flat, 'flex h-[11px] w-5 items-center justify-center')}><WaveGlyph /></button>
        <span className="ml-[6px] flex items-center"><ArrowsGlyph /><Slider label="Editor zoom" value={55} className="ml-1 w-7" light /></span>
      </div>
      <div className="flex">
        <div className="flex w-[160px] shrink-0 flex-col">
          <div className="flex h-[25px] items-center border-b border-[#2a2a2a] bg-[#454545] pl-[6px] pr-2">
            <Mic />
            <div className="flex-1 pt-px text-center text-[#cfcfcf]">
              <p className="whitespace-nowrap text-[8px] leading-[8px]">114 Notes selected</p>
              <p className="text-[7px] leading-[8px] text-[#8b8b8b]">in 2 Regions</p>
            </div>
            <span className="mr-[6px]"><HeaderButton label="Notes filter"><FilterGlyph /></HeaderButton></span>
            <HeaderButton label="Editor options"><TrayGlyph /></HeaderButton>
          </div>
          <div className="flex">
            <div className="flex min-w-0 flex-1 flex-col px-[7px] pt-[5px] text-[8px] leading-[9px] text-[#979797]">
              <label htmlFor="quantize">Time Quantize</label>
              <div className="mt-[3px] flex h-[11px] rounded-[2px] border border-[#2c2c2c] bg-[#484848]">
                <select id="quantize" className="min-w-0 flex-1 appearance-none bg-transparent outline-none"><option value="" /></select>
                <span className="pr-1 text-[5px] text-[#888]">▼</span>
                <button className="w-[18px] border-l border-[#2c2c2c] font-bold text-[#ddd]">Q</button>
              </div>
              <div className="flex h-[14px] items-center gap-1 rounded-[2px] border border-[#353535] pl-[2px]">
                <span>Strength</span>
                <Slider label="Strength" value={98} className="flex-1" />
                <span className="w-[17px] text-[#ddd]">100</span>
              </div>
              <span className="mt-3">Pitch Correction</span>
              <div className="mt-[2px] flex h-[13px] items-center gap-1 rounded-[2px] border border-[#353535] pl-1">
                <Slider label="Pitch Correction" value={98} className="flex-1" />
                <span className="w-[17px] text-[#ddd]">100</span>
              </div>
              <span className="mt-[22px]">Gain</span>
              <div className="mt-[2px] flex h-[13px] items-center gap-1 rounded-[2px] border border-[#353535] pl-1">
                <Slider label="Gain" value={50} className="flex-1" />
                <span className="w-[17px] text-center text-[#ddd]">0</span>
              </div>
            </div>
            <Keyboard />
          </div>
        </div>
        <div className="min-w-0 flex-1 border-l border-[#161616] bg-[#1b1d20] pl-[2px]">
          <div className="relative">
            <div className="flex h-[13px] overflow-hidden bg-[#303030]">
              {['45', '45.2', '45.3', '45.4', '46', '46.2', '46.3'].map((b) => (
                <span key={b} className="w-[15.5%] shrink-0 border-l border-[#444] pl-px text-[7px] leading-[10px] text-[#bdbdbd]">{b}</span>
              ))}
            </div>
            <div className="flex h-3 items-center gap-1 border-b border-[#101a2a] bg-gradient-to-b from-[#2f5a9c] to-[#28508e] pl-[2px] text-[7px] font-bold text-[#dce9ff]">
              <svg viewBox="0 0 10 8" className="h-2 w-[10px]" fill="none" stroke="currentColor"><path d="M1 .8h8v6.400H1z" /><path d="M3.500 2.500v3L6.500 4z" fill="currentColor" stroke="none" /></svg>
              Lead Vocal
              <ClipBadge type="circle" />
            </div>
            <PitchEditor />
            <div className="absolute bottom-0 left-[69.700%] top-4 w-px bg-[#a5a9ae]">
              <svg viewBox="0 0 9 9" className="absolute -left-1 top-0 h-[9px] w-[9px]"><path d="M1 .5h7V4L4.500 8 1 4z" fill="#8fa3b8" stroke="#c6d0da" strokeWidth=".7" /></svg>
            </div>
          </div>
        </div>
      </div>
    </section>
  );
}

export default function App() {
  return (
    <div className="min-h-screen bg-white pb-2 pl-[59px] pr-[66px] pt-[10px] font-['Liberation_Sans',Arial,sans-serif]">
      <div className="min-w-[760px] overflow-hidden border-b border-[#777] bg-[#3a3a3a]">
        <Toolbar />
        <div className="flex">
          <Inspector />
          <main className="min-w-0 flex-1 pl-px">
            <Arrangement />
            <Editor />
          </main>
        </div>
      </div>
    </div>
  );
}
